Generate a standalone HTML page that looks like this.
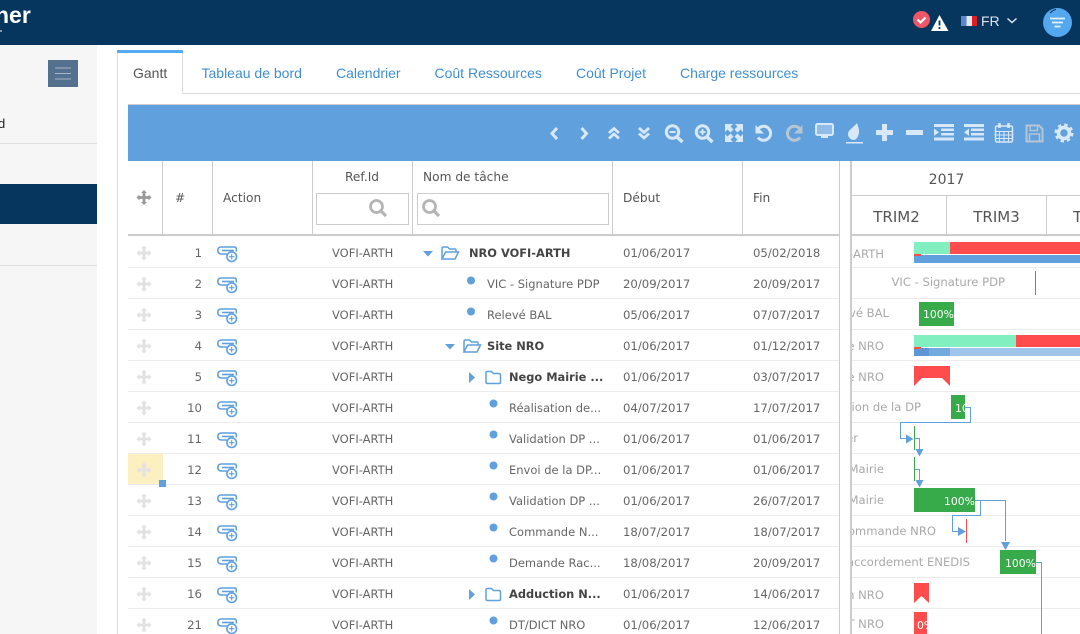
<!DOCTYPE html>
<html lang="fr"><head><meta charset="utf-8"><title>Gantt</title>
<style>
html,body{margin:0;padding:0;width:1080px;height:634px;overflow:hidden;background:#fff}
svg{display:block}
text{font-family:"DejaVu Sans",sans-serif;font-size:11.5px;fill:#666}
.t{font-family:"Liberation Sans",sans-serif;font-size:14px;fill:#3f8fd2}
.h{font-size:12.2px;fill:#555}
.b{font-weight:bold;font-size:11.4px;fill:#444}
.d{font-size:11.7px}
.g{fill:#a9a9a9;font-size:11.6px}
.w{fill:#fff;font-size:10.8px}
.tb{fill:none;stroke:#d9e8f7}
.tf{fill:#d9e8f7}
</style></head><body>
<svg width="1080" height="634" viewBox="0 0 1080 634" xmlns="http://www.w3.org/2000/svg">
<defs>
<g id="mv"><path d="M0-7.500l3 3H1.400V-1.400H4.500V-3L7.500 0 4.500 3V1.400H1.400V4.500H3L0 7.500-3 4.500H-1.400V1.400H-4.500V3L-7.500 0-4.500-3V-1.400H-1.400V-4.500H-3Z"/></g>
<g id="ac" fill="none" stroke="#5fa0dd" stroke-width="1.600">
<path d="M10 8H4.500Q.8 8 .8 4.500T4.500 1H17.500Q19.300 1 19.300 3V5.500"/><path d="M17 4.500H5"/>
<circle cx="14.700" cy="10.700" r="4.800" fill="#fff"/><path d="M14.700 8v5.400M12 10.700h5.400" stroke-width="1.100"/></g>
<g id="fo" fill="none" stroke="#5fa0dd" stroke-width="1.500"><path d="M1 13V2.500Q1 1 2.500 1H6.500L8.500 3H14Q15 3 15 4V6"/><path d="M1 13L4.500 6H17.500L14 13Z"/></g>
<g id="fc" fill="none" stroke="#5fa0dd" stroke-width="1.500"><path d="M1 3Q1 1.500 2.500 1.500H6.500L8.500 3.500H14Q15.500 3.500 15.500 5V12Q15.500 13.500 14 13.500H2.500Q1 13.500 1 12Z"/></g>
<g id="se" fill="none" stroke="#b5b5b5"><circle cx="-1.500" cy="-1.500" r="6" stroke-width="2.800"/><path d="M3 3L8 8" stroke-width="3.200"/></g>
<clipPath id="c1"><rect x="852" y="236" width="228" height="398"/></clipPath>
<clipPath id="c2"><rect x="951" y="395" width="14" height="24"/></clipPath>
<clipPath id="c3"><rect x="914" y="612" width="13" height="22"/></clipPath>
</defs>

<!-- top bar -->
<rect width="1080" height="45" fill="#06355d"/>
<text x="-5" y="23" style="font-family:'Liberation Sans',sans-serif;font-size:23px;font-weight:bold;fill:#fff">ner</text>
<rect x="0" y="30" width="2" height="2" fill="#7f98ae"/>
<circle cx="921.500" cy="19.500" r="8.500" fill="#ef5666"/>
<path d="M917.500 19.500l3 3 5-5" fill="none" stroke="#fff" stroke-width="2.200"/>
<path d="M939.500 15L948.500 31H931Z" fill="#fff"/><path d="M939.500 20.500v5M939.500 27v2" stroke="#06355d" stroke-width="1.800"/>
<rect x="961" y="16" width="5.500" height="10" fill="#5f86c6"/><rect x="966.500" y="16" width="5.500" height="10" fill="#e6e6ee"/><rect x="972" y="16" width="5" height="10" fill="#e21c24"/>
<text x="981" y="26" style="font-family:'Liberation Sans',sans-serif;font-size:14px;fill:#e0e6ec">FR</text>
<path d="M1007.500 18.500l4.500 4 4.500-4" fill="none" stroke="#e0e6ec" stroke-width="1.500"/>
<circle cx="1057.500" cy="22.500" r="14.500" fill="#53a8f0"/>
<path d="M1050 18.500h15M1052 22.500h11M1054.500 26.500h6" stroke="#e4f1fc" stroke-width="1.700"/>
<path d="M1050 13q3-3 6-3.500" fill="none" stroke="#06355d" stroke-width="1"/>

<!-- sidebar -->
<rect y="45" width="97" height="589" fill="#f6f6f6"/>
<rect x="48" y="60" width="30" height="27" fill="#54708f"/>
<path d="M55 68h16M55 73.500h16M55 79h16" stroke="#a6b6c8" stroke-width="1"/>
<text x="-2" y="128" style="font-family:'Liberation Sans',sans-serif;font-size:13px;fill:#222">d</text>
<rect y="143" width="97" height="1" fill="#e0e0e0"/>
<rect y="184" width="97" height="40" fill="#06355d"/>
<rect y="265" width="97" height="1" fill="#e0e0e0"/>

<!-- tabs -->
<rect x="117" y="50" width="66" height="3" fill="#53aaf5"/>
<path d="M117.500 53V634" stroke="#ddd"/>
<path d="M182.500 53V93.500H1080" stroke="#ddd" fill="none"/>
<text x="133" y="78" class="t" style="fill:#555">Gantt</text>
<text x="201.500" y="78" class="t">Tableau de bord</text>
<text x="336" y="78" class="t">Calendrier</text>
<text x="434.500" y="78" class="t">Coût Ressources</text>
<text x="576" y="78" class="t">Coût Projet</text>
<text x="680" y="78" class="t">Charge ressources</text>

<!-- toolbar -->
<rect x="128" y="104" width="952" height="1" fill="#ccc"/>
<rect x="128" y="105" width="952" height="56" fill="#5fa0dd"/>
<path class="tb" stroke-width="3" d="M557 128l-5 5.500 5 5.500M581.500 128l5 5.500-5 5.500"/>
<path class="tb" stroke-width="2.800" d="M609 133l5-4.500 5 4.500M609 138.500l5-4.500 5 4.500M639 128l5 4.500 5-4.500M639 133.500l5 4.500 5-4.500"/>
<circle class="tb" stroke-width="3" cx="672.500" cy="132" r="6.200"/><path class="tb" stroke-width="3.400" d="M677 137l5.500 5"/><path class="tb" stroke-width="2" d="M669.500 132h6"/>
<circle class="tb" stroke-width="3" cx="702.500" cy="132" r="6.200"/><path class="tb" stroke-width="3.400" d="M707 137l5.500 5"/><path class="tb" stroke-width="1.800" d="M699.500 132h6M702.500 129v6"/>
<path class="tf" d="M725 124h8l-2.500 2.500 3 3-3 3-3-3-2.500 2.500ZM743 124v8l-2.500-2.500-3 3-3-3 3-3-2.500-2.500ZM725 142v-8l2.500 2.500 3-3 3 3-3 3 2.500 2.500ZM743 142h-8l2.500-2.500-3-3 3-3 3 3 2.500-2.500Z"/>
<path class="tb" stroke-width="3" d="M758.500 128.500a7 7 0 1 1-.5 9"/><path class="tf" d="M755.500 125v8.500h8.500Z"/>
<path fill="none" stroke="#b9c5d0" stroke-width="3" d="M799.500 128.500a7 7 0 1 0 .5 9"/><path fill="#b9c5d0" d="M802.500 125v8.500h-8.500Z"/>
<rect x="816" y="124" width="17" height="11" rx="1.500" fill="#8fbce8" stroke="#d9e8f7" stroke-width="2"/><rect x="821" y="135.500" width="7" height="2.500" class="tf"/>
<path class="tf" d="M857 123c2 6 3 9 1 13-1 3-3 4-5 4-3-1-5-3-5-6 0-4 5-6 9-11Z"/><rect x="846" y="142" width="17" height="1.500" class="tf"/>
<path class="tb" stroke-width="5" d="M876 132.500h17M884.500 124v17"/>
<rect x="906" y="130" width="17" height="5" class="tf"/>
<path class="tf" d="M934 124h20v3h-20ZM941 128.500h13v2.500h-13ZM941 133h13v2.500h-13ZM934 137.500h20v3h-20ZM934 128.500l5 3.700-5 3.700Z"/>
<path class="tf" d="M964 124h20v3h-20ZM971 128.500h13v2.500h-13ZM971 133h13v2.500h-13ZM964 137.500h20v3h-20ZM969 128.500l-5 3.700 5 3.700Z"/>
<g fill="none" stroke="#d9e8f7"><rect x="995.500" y="126" width="17" height="16" rx="1.500" stroke-width="1.500"/><path d="M999.500 123v5M1008.500 123v5" stroke-width="2.600"/><path d="M995 131.500h18M995 135h18M995 138.500h18M999.500 131.500v11M1004 131.500v11M1008.500 131.500v11" stroke-width="1"/></g>
<g fill="none" stroke="#b9c5d0"><path d="M1026.500 125.500h12.500l3.500 3.500v12.500h-16Z" stroke-width="2"/><rect x="1030" y="125.500" width="7.500" height="5" stroke-width="1.500"/><rect x="1029.500" y="134" width="10" height="7.500" stroke-width="1.500"/></g>
<circle cx="1064" cy="133" r="5.500" fill="none" stroke="#d9e8f7" stroke-width="3.600"/><circle cx="1064" cy="133" r="8.200" fill="none" stroke="#d9e8f7" stroke-width="2.600" stroke-dasharray="3.300 3.140"/>

<!-- header -->
<g stroke="#ccc" fill="none">
<path d="M162.500 161V235M212.500 161V235M312.500 161V235M412.500 161V235M612.500 161V235M742.500 161V235"/>
<path d="M839.500 161V634"/>
<path d="M851 161V634" stroke-width="2"/>
<path d="M852 195.500H1080M946.500 196V235M1046.500 196V235"/>
<rect x="316.500" y="193.500" width="92" height="31"/><rect x="417.500" y="193.500" width="191" height="31"/>
</g>
<rect x="128" y="234" width="711" height="2" fill="#ccc"/>
<rect x="852" y="234" width="228" height="2" fill="#ccc"/>
<use href="#mv" x="144" y="197.500" fill="#999"/>
<text x="175" y="202" class="h">#</text>
<text x="223" y="202" class="h">Action</text>
<text x="345" y="181" class="h">Ref.Id</text>
<text x="423" y="181" class="h">Nom de tâche</text>
<text x="623" y="202" class="h">Début</text>
<text x="753" y="202" class="h">Fin</text>
<use href="#se" x="378" y="208"/><use href="#se" x="431" y="208"/>
<text x="946.500" y="184" text-anchor="middle" style="font-size:14px;fill:#555">2017</text>
<text x="896.500" y="222" text-anchor="middle" style="font-size:15px;fill:#555">TRIM2</text>
<text x="996.500" y="222" text-anchor="middle" style="font-size:15px;fill:#555">TRIM3</text>
<text x="1073" y="222" style="font-size:15px;fill:#555">T</text>

<!-- row lines -->
<path stroke="#ececec" d="M128 267.500H839M128 298.500H839M128 329.500H839M128 360.500H839M128 391.500H839M128 422.500H839M128 453.500H839M128 484.500H839M128 515.500H839M128 546.500H839M128 577.500H839M128 608.500H839M852 267.500H1080M852 298.500H1080M852 329.500H1080M852 360.500H1080M852 391.500H1080M852 422.500H1080M852 453.500H1080M852 484.500H1080M852 515.500H1080M852 546.500H1080M852 577.500H1080M852 608.500H1080"/>

<rect x="128" y="454" width="35" height="30" fill="#fdf0c0"/>
<g fill="#e2e2e2">
<use href="#mv" x="144" y="253"/><use href="#mv" x="144" y="284"/><use href="#mv" x="144" y="315"/><use href="#mv" x="144" y="346"/><use href="#mv" x="144" y="377"/><use href="#mv" x="144" y="408"/><use href="#mv" x="144" y="439"/><use href="#mv" x="144" y="470"/><use href="#mv" x="144" y="501"/><use href="#mv" x="144" y="532"/><use href="#mv" x="144" y="563"/><use href="#mv" x="144" y="594"/><use href="#mv" x="144" y="625"/>
</g>
<rect x="159" y="480" width="7" height="7" fill="#5fa0dd"/>

<use href="#ac" x="217" y="246"/><use href="#ac" x="217" y="277"/><use href="#ac" x="217" y="308"/><use href="#ac" x="217" y="339"/><use href="#ac" x="217" y="370"/><use href="#ac" x="217" y="401"/><use href="#ac" x="217" y="432"/><use href="#ac" x="217" y="463"/><use href="#ac" x="217" y="494"/><use href="#ac" x="217" y="525"/><use href="#ac" x="217" y="556"/><use href="#ac" x="217" y="587"/><use href="#ac" x="217" y="618"/>

<g transform="translate(0,-1)">
<g text-anchor="end">
<text x="202" y="258" class="d">1</text><text x="202" y="289" class="d">2</text><text x="202" y="320" class="d">3</text><text x="202" y="351" class="d">4</text><text x="202" y="382" class="d">5</text><text x="202" y="413" class="d">10</text><text x="202" y="444" class="d">11</text><text x="202" y="475" class="d">12</text><text x="202" y="506" class="d">13</text><text x="202" y="537" class="d">14</text><text x="202" y="568" class="d">15</text><text x="202" y="599" class="d">16</text><text x="202" y="630" class="d">21</text>
</g>
<g>
<text x="332" y="258">VOFI-ARTH</text><text x="332" y="289">VOFI-ARTH</text><text x="332" y="320">VOFI-ARTH</text><text x="332" y="351">VOFI-ARTH</text><text x="332" y="382">VOFI-ARTH</text><text x="332" y="413">VOFI-ARTH</text><text x="332" y="444">VOFI-ARTH</text><text x="332" y="475">VOFI-ARTH</text><text x="332" y="506">VOFI-ARTH</text><text x="332" y="537">VOFI-ARTH</text><text x="332" y="568">VOFI-ARTH</text><text x="332" y="599">VOFI-ARTH</text><text x="332" y="630">VOFI-ARTH</text>
</g>
<text x="469" y="258" class="b">NRO VOFI-ARTH</text>
<text x="487" y="289">VIC - Signature PDP</text>
<text x="487" y="320">Relevé BAL</text>
<text x="487" y="351" class="b">Site NRO</text>
<text x="509" y="382" class="b">Nego Mairie ...</text>
<text x="509" y="413">Réalisation de...</text>
<text x="509" y="444">Validation DP ...</text>
<text x="509" y="475">Envoi de la DP...</text>
<text x="509" y="506">Validation DP ...</text>
<text x="509" y="537">Commande N...</text>
<text x="509" y="568">Demande Rac...</text>
<text x="509" y="599" class="b">Adduction N...</text>
<text x="509" y="630">DT/DICT NRO</text>
<g>
<text x="623" y="258" class="d">01/06/2017</text><text x="753" y="258" class="d">05/02/2018</text>
<text x="623" y="289" class="d">20/09/2017</text><text x="753" y="289" class="d">20/09/2017</text>
<text x="623" y="320" class="d">05/06/2017</text><text x="753" y="320" class="d">07/07/2017</text>
<text x="623" y="351" class="d">01/06/2017</text><text x="753" y="351" class="d">01/12/2017</text>
<text x="623" y="382" class="d">01/06/2017</text><text x="753" y="382" class="d">03/07/2017</text>
<text x="623" y="413" class="d">04/07/2017</text><text x="753" y="413" class="d">17/07/2017</text>
<text x="623" y="444" class="d">01/06/2017</text><text x="753" y="444" class="d">01/06/2017</text>
<text x="623" y="475" class="d">01/06/2017</text><text x="753" y="475" class="d">01/06/2017</text>
<text x="623" y="506" class="d">01/06/2017</text><text x="753" y="506" class="d">26/07/2017</text>
<text x="623" y="537" class="d">18/07/2017</text><text x="753" y="537" class="d">18/07/2017</text>
<text x="623" y="568" class="d">18/08/2017</text><text x="753" y="568" class="d">20/09/2017</text>
<text x="623" y="599" class="d">01/06/2017</text><text x="753" y="599" class="d">14/06/2017</text>
<text x="623" y="630" class="d">01/06/2017</text><text x="753" y="630" class="d">12/06/2017</text>
</g>
</g>

<!-- tree -->
<g fill="#5fa0dd">
<path d="M423 251h10l-5 5.500ZM445 344h10l-5 5.500ZM469 372v11l6-5.500ZM469 589v11l6-5.500Z"/>
<circle cx="471" cy="280.500" r="4"/><circle cx="471" cy="311.500" r="4"/>
<circle cx="493.500" cy="403.500" r="4"/><circle cx="493.500" cy="434.500" r="4"/><circle cx="493.500" cy="465.500" r="4"/><circle cx="493.500" cy="496.500" r="4"/><circle cx="493.500" cy="527.500" r="4"/><circle cx="493.500" cy="558.500" r="4"/><circle cx="493.500" cy="620.500" r="4"/>
</g>
<use href="#fo" x="441" y="246"/><use href="#fo" x="463" y="339"/><use href="#fc" x="485" y="370"/><use href="#fc" x="485" y="587"/>

<!-- gantt labels -->
<g clip-path="url(#c1)" text-anchor="end">
<text x="884" y="258" class="g">NRO VOFI-ARTH</text>
<text x="1005" y="286" class="g">VIC - Signature PDP</text>
<text x="889" y="317" class="g">Relevé BAL</text>
<text x="884" y="350" class="g">Site NRO</text>
<text x="884" y="381" class="g">Nego Mairie NRO</text>
<text x="921" y="411" class="g">Réalisation de la DP</text>
<text x="858" y="442" class="g">Valider</text>
<text x="884" y="473" class="g">Envoi Mairie</text>
<text x="884" y="504" class="g">Validation Mairie</text>
<text x="936" y="535" class="g">Commande NRO</text>
<text x="970" y="566" class="g">Demande Raccordement ENEDIS</text>
<text x="884" y="599" class="g">Adduction NRO</text>
<text x="884" y="628" class="g">DT/DICT NRO</text>
</g>

<!-- bars -->
<rect x="914" y="242" width="36" height="12" fill="#82efc0"/><rect x="950" y="242" width="130" height="12" fill="#ff4d4d"/>
<rect x="914" y="255" width="166" height="8" fill="#5fa0dd"/><rect x="914" y="254" width="7" height="2" fill="#ff4d4d"/>
<rect x="1035" y="271" width="1" height="24" fill="#e8505a"/>
<rect x="919" y="302" width="35" height="24" fill="#37ab4a"/><text x="923" y="318" class="w">100%</text>
<rect x="914" y="335" width="102" height="12" fill="#82efc0"/><rect x="1016" y="335" width="64" height="12" fill="#ff4d4d"/>
<rect x="914" y="348" width="15" height="8" fill="#5c96d5"/><rect x="929" y="348" width="21" height="8" fill="#72aae0"/><rect x="950" y="348" width="130" height="8" fill="#9fc6ea"/><rect x="914" y="347" width="7" height="2" fill="#ff4d4d"/>
<path d="M914 366H950V386L942 378H922L914 386Z" fill="#ff4d4d"/>
<rect x="951" y="395" width="14" height="24" fill="#37ab4a"/><text x="955" y="412" class="w" clip-path="url(#c2)">100%</text>
<rect x="914" y="426" width="1" height="24" fill="#37ab4a"/><rect x="914" y="457" width="1" height="24" fill="#37ab4a"/>
<rect x="914" y="488" width="61" height="24" fill="#37ab4a"/><text x="944" y="505" class="w">100%</text>
<rect x="966" y="519" width="1" height="24" fill="#ff4d4d"/>
<rect x="1000" y="550" width="36" height="24" fill="#37ab4a"/><text x="1005" y="567" class="w">100%</text>
<path d="M914 583H929V603L921.500 596L914 603Z" fill="#ff4d4d"/>
<rect x="914" y="612" width="13" height="22" fill="#ff4d4d"/><text x="917" y="629" class="w" clip-path="url(#c3)">0%</text>

<!-- connectors -->
<g fill="none" stroke="#5fa0dd" stroke-width="1">
<path d="M965 407.500H970.500V422.500H900.500V438.500H908"/>
<path d="M915 438.500H919.500V450"/>
<path d="M915 469.500H919.500V481"/>
<path d="M975 500.500H1005.500V541M980.500 500.500V515.500H952.500V531.500H958"/>
<path d="M1036 562.500H1041.500V634"/>
</g>
<g fill="#5fa0dd">
<path d="M906 434.500L913.500 439L906 443.500ZM915.500 449H923.500L919.500 456.500ZM915.500 480H923.500L919.500 487.500ZM958 527L966 531.500L958 536ZM1001 542H1010L1005.500 550Z"/>
</g>
</svg>
</body></html>
